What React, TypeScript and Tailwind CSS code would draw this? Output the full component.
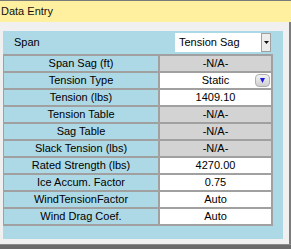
const FONT = {fontFamily: '"Liberation Sans", Arial, sans-serif'}

type Row = {label: string; value: string; na?: boolean; combo?: boolean}

const ROWS: Row[] = [
  {label: 'Span Sag (ft)', value: '-N/A-', na: true},
  {label: 'Tension Type', value: 'Static', combo: true},
  {label: 'Tension (lbs)', value: '1409.10'},
  {label: 'Tension Table', value: '-N/A-', na: true},
  {label: 'Sag Table', value: '-N/A-', na: true},
  {label: 'Slack Tension (lbs)', value: '-N/A-', na: true},
  {label: 'Rated Strength (lbs)', value: '4270.00'},
  {label: 'Ice Accum. Factor', value: '0.75'},
  {label: 'WindTensionFactor', value: 'Auto'},
  {label: 'Wind Drag Coef.', value: 'Auto'},
]

function ComboButton() {
  return (
    <div className="absolute right-[1px] top-[1px] flex h-[13px] w-[15px] items-center justify-center rounded-[4px] border border-[#b0b0b0] bg-gradient-to-b from-[#f4f4f4] to-[#cfcfcf]">
      <svg width="5" height="5" viewBox="0 0 5 5">
        <path d="M0 0 H5 L2.5 5 Z" fill="#1a1ae0"/>
      </svg>
    </div>
  )
}

function DataRow({row}: {row: Row}) {
  return (
    <div className="flex h-[17px] border-t-2 border-[#a0a0a0]">
      <div className="flex w-[154px] items-center justify-center bg-[#add8e6] leading-[15px]">{row.label}</div>
      <div className="w-[2px] bg-[#a0a0a0]"/>
      <div
        className={`relative flex w-[111px] items-center justify-center leading-[15px] ${
          row.na ? 'bg-[#d3d3d3]' : 'bg-white'
        }`}
      >
        {row.value}
        {row.combo && <ComboButton/>}
      </div>
    </div>
  )
}

export default function App() {
  return (
    <div className="flex h-[249px] w-[291px] flex-col bg-[#f0f0f0] text-[11px] text-black" style={FONT}>
      <div className="h-px bg-[#7a7a7a]"/>
      <div className="flex h-[21px] items-center bg-[#fff0a0] pl-[1px] text-[#111]">Data Entry</div>

      <div className="flex flex-1">
        <div className="flex-1 pb-[5px] pl-[3px] pr-[6px] pt-[9px]">
          <div className="flex h-full flex-col bg-[#add8e6]">
            <div className="flex h-[23px] items-start">
              <span className="pl-[11px] pt-[5px] leading-[13px]">Span</span>
              <div className="ml-auto mr-[12px] mt-[2px] flex h-[19px]">
                <div className="flex w-[86px] items-center bg-white pl-[4px]">Tension Sag</div>
                <div className="flex w-[10px] items-center justify-center border border-[#a0a0a0] bg-[#ececec]">
                  <svg width="5" height="3" viewBox="0 0 5 3">
                    <path d="M0 0 H5 L2.5 3 Z" fill="#111"/>
                  </svg>
                </div>
              </div>
            </div>

            <div className="w-[270px] border-b-2 border-l border-r-2 border-[#a0a0a0]">
              {ROWS.map((r) => (
                <DataRow key={r.label} row={r}/>
              ))}
            </div>
          </div>
        </div>
        <div className="w-[2px] bg-[#7d7d7d]"/>
      </div>

      <div className="h-[5px] border-t border-[#8a8a8a] bg-[#6b6b6b]"/>
    </div>
  )
}
